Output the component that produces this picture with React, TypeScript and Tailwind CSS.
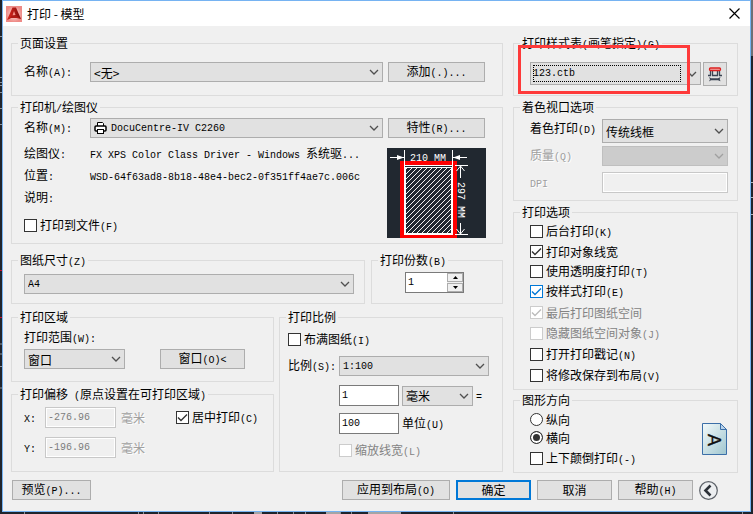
import React, { useState } from "react";
import clsx from "clsx";

// Latin runs are set in a narrower fixed width face than the Chinese ones
function Txt({ children }: { children: string }) {
  const parts = children.split(/([\x20-\x7e]+)/).filter(Boolean);
  return (
    <>
      {parts.map((p, i) =>
        /[\x20-\x7e]/.test(p[0]) ? (
          <span
            key={i}
            className="whitespace-pre font-['Liberation_Mono',monospace] text-[10px]"
          >
            {p}
          </span>
        ) : (
          <span key={i}>{p}</span>
        )
      )}
    </>
  );
}

function Group({
  title,
  className,
  bodyClass,
  children,
}: {
  title: string;
  className?: string;
  bodyClass?: string;
  children: React.ReactNode;
}) {
  return (
    <fieldset className={clsx("min-w-0 border border-[#dcdcdc]", className)}>
      <legend className="ml-1.5 h-[13px] px-0.5 leading-[11px] whitespace-nowrap">
        <Txt>{title}</Txt>
      </legend>
      <div className={bodyClass}>{children}</div>
    </fieldset>
  );
}

function Combo({
  id,
  label,
  options,
  className,
  selectClass = "pl-[3px]",
  latin,
  disabled,
  children,
}: {
  id: string;
  label?: string;
  options: string[];
  className?: string;
  selectClass?: string;
  latin?: boolean;
  disabled?: boolean;
  children?: React.ReactNode;
}) {
  return (
    <div className={clsx("relative", className)}>
      <select
        id={id}
        aria-label={label}
        disabled={disabled}
        className={clsx(
          "block h-full w-full appearance-none rounded-none border pr-5 outline-none",
          disabled
            ? "border-[#bfbfbf] bg-[#cccccc] opacity-100"
            : "border-[#adadad] bg-[#e1e1e1] text-black",
          latin && "font-['Liberation_Mono',monospace] text-[10px]",
          selectClass
        )}
      >
        {options.map((o) => (
          <option key={o}>{o}</option>
        ))}
      </select>
      {children}
      <svg
        className={clsx(
          "pointer-events-none absolute inset-y-0 right-1 my-auto",
          disabled ? "text-[#a0a0a0]" : "text-[#505050]"
        )}
        width="10"
        height="6"
        viewBox="0 0 10 6"
      >
        <path d="M1 1l4 4 4-4" fill="none" stroke="currentColor" strokeWidth="1.3" />
      </svg>
    </div>
  );
}

function Btn({
  className,
  primary,
  children,
}: {
  className?: string;
  primary?: boolean;
  children: string;
}) {
  return (
    <button
      className={clsx(
        "h-5 bg-[#e1e1e1] leading-none whitespace-nowrap",
        primary ? "border-2 border-[#0078d7]" : "border border-[#adadad]",
        className
      )}
    >
      <Txt>{children}</Txt>
    </button>
  );
}

function Check({
  label,
  checked = false,
  disabled,
  active,
}: {
  label: string;
  checked?: boolean;
  disabled?: boolean;
  active?: boolean;
}) {
  return (
    <label
      className={clsx(
        "flex h-[13px] items-center gap-[3px] leading-[13px] whitespace-nowrap",
        disabled && "text-[#838383]"
      )}
    >
      <span className="relative block size-[13px] shrink-0">
        <input
          type="checkbox"
          defaultChecked={checked}
          disabled={disabled}
          className={clsx(
            "peer block size-[13px] appearance-none border bg-white",
            disabled
              ? "border-[#cccccc]"
              : active
                ? "border-[#0078d7]"
                : "border-[#333333]"
          )}
        />
        <svg
          className={clsx(
            "pointer-events-none absolute inset-0 hidden peer-checked:block",
            disabled
              ? "text-[#bcbcbc]"
              : active
                ? "text-[#0078d7]"
                : "text-[#333333]"
          )}
          width="13"
          height="13"
          viewBox="0 0 13 13"
        >
          <path d="M2 6.5L5 9.5L11 3.5" fill="none" stroke="currentColor" strokeWidth="1.4" />
        </svg>
      </span>
      <span>
        <Txt>{label}</Txt>
      </span>
    </label>
  );
}

function Field({
  id,
  label,
  value,
  disabled,
  className,
}: {
  id: string;
  label?: string;
  value: string;
  disabled?: boolean;
  className?: string;
}) {
  return (
    <input
      id={id}
      aria-label={label}
      type="text"
      defaultValue={value}
      disabled={disabled}
      className={clsx(
        "block h-[21px] min-w-0 border pl-0.5 font-['Liberation_Mono',monospace] text-[10px] outline-none",
        disabled
          ? "border-[#c8c8c8] bg-[#f0f0f0] text-[#7d7d7d] inset-ring inset-ring-white"
          : "border-[#7a7a7a] bg-white text-black",
        className
      )}
    />
  );
}

function PaperPreview() {
  return (
    <svg width="99" height="90" viewBox="0 0 99 90" className="shrink-0">
      <defs>
        <pattern id="hatch" width="5" height="5" patternUnits="userSpaceOnUse">
          <path d="M-1 1l2-2M0 5l5-5M4 6l2-2" stroke="#f4f4f4" strokeWidth="1" />
        </pattern>
      </defs>
      <rect width="99" height="90" fill="#212830" />
      <rect x="15" y="15" width="53" height="73" fill="#212830" stroke="#ff0000" strokeWidth="4" />
      <rect x="18" y="18" width="47" height="68" fill="url(#hatch)" stroke="#fff" strokeWidth="2" />
      <path d="M18 18.5h47" stroke="#212830" />
      <path d="M18 19.5h47" stroke="#fff" />
      <g stroke="#fff" fill="none">
        <path d="M17.5 2v15M65.5 2v15M3 9.5h14M66 9.5h14" />
        <path d="M68 17.5h13M68 86.5h13M73.5 18v12M73.5 75v11" />
        <path d="M69.5 23l4-5 4 5M69.5 81l4 5 4-5" />
      </g>
      <path d="M10 7l7 2.5-7 2.5zM73 7l-7 2.5 7 2.5z" fill="#fff" />
      <g fill="#fff" fontFamily="Liberation Mono, monospace" fontSize="10">
        <text x="23" y="13">
          210 MM
        </text>
        <text transform="translate(71 34) rotate(90)">297 MM</text>
      </g>
    </svg>
  );
}

function Logo() {
  return (
    <svg width="16" height="16" viewBox="0 0 16 16">
      <defs>
        <radialGradient id="logoBg">
          <stop offset="0" stopColor="#fbe3e0" />
          <stop offset="1" stopColor="#ee8a86" />
        </radialGradient>
        <linearGradient id="logoA" x1="0" x2="1">
          <stop offset="0" stopColor="#e0281e" />
          <stop offset="1" stopColor="#7d0c0c" />
        </linearGradient>
      </defs>
      <rect width="16" height="16" fill="url(#logoBg)" />
      <path d="M6.5 1.5h3.5L15 13l-3.500-1.500L8 10l-3.500 2L1 14z" fill="url(#logoA)" />
      <path d="M8 5l1.500 4-3 .5z" fill="#f4938b" />
      <path d="M1 14l5.500-4.500 4 .5L15 13l-4.500-1H5z" fill="#b01a14" />
    </svg>
  );
}

function PrinterIcon() {
  return (
    <svg
      className="pointer-events-none absolute inset-y-0 left-1 my-auto"
      width="13"
      height="12"
      viewBox="0 0 13 12"
    >
      <path d="M3.500 4.500v-4h5l1 1v3" fill="#fff" stroke="#000" />
      <rect x="1" y="4" width="11" height="5" rx="1" fill="#fff" stroke="#000" strokeWidth="1.500" />
      <rect x="3.500" y="7.500" width="6" height="4" fill="#fff" stroke="#000" />
    </svg>
  );
}

function EditTableIcon() {
  return (
    <svg width="14" height="15" viewBox="0 0 14 15">
      <path d="M2.500 4v4.500M11.500 4v4.500M4.500 4v4.500h5V4M0 8.500h3M11 8.500h3" fill="none" stroke="#3b4453" strokeWidth="1.300" />
      <rect x="1.500" y="1" width="11" height="2.500" rx="1" fill="#f5b5b0" stroke="#dc1f1f" strokeWidth="1.300" />
      <path d="M1 10l2 1.300h7l2.500-1.300-.8 2 .8 2.300-2.500-1H3L1 14.500l1-2.200z" fill="#3b4453" />
    </svg>
  );
}

function LandscapeIcon() {
  return (
    <svg width="25" height="32" viewBox="0 0 25 32">
      <defs>
        <linearGradient id="page" x1="0" y1="0" x2="1" y2="1">
          <stop offset="0" stopColor="#f4fafb" />
          <stop offset="1" stopColor="#9fc6cf" />
        </linearGradient>
      </defs>
      <path d="M.5.5h18l6 6v25H.5z" fill="url(#page)" stroke="#3c6fa8" />
      <path d="M18.500.5v6h6z" fill="#b9d3ea" stroke="#3c6fa8" />
      <text
        transform="translate(6 11) rotate(90)"
        fontFamily="Liberation Sans, sans-serif"
        fontSize="18"
        fill="#111"
        stroke="#111"
        strokeWidth="0.3"
      >
        A
      </text>
    </svg>
  );
}

// the drawing area that shows round the edges of the dialog
function Backdrop() {
  return (
    <svg className="absolute inset-0 -z-10 h-full w-full" viewBox="0 0 753 514" preserveAspectRatio="none">
      <rect width="753" height="514" fill="#1f242c" />
      <path d="M0 36.500h2M0 77.500h2M0 82.500h2M0 85.500h2M0 92.500h2M0 108.500h2M0 124.500h2M0 344h2M0 354h2M0 366.500h2M0 388h2" stroke="#8b9096" />
      <path d="M0 270.500h2M0 317.500h2" stroke="#c8102e" />
      <path d="M752 0v56" stroke="#6b7077" strokeWidth="2" />
      <path d="M751 182.500h2M751 197.500h2M751 214.500h2" stroke="#b0b4b8" />
      <path d="M24.500 512v2M138.500 512v2M143.500 512v2M158.500 512v2M209.500 512v2M232.500 512v2M277.500 512v2M293.500 512v2M305.500 512v2M340.500 512v2M351.500 512v2M453.500 512v2M742.500 512v2" stroke="#8b9096" />
      <path d="M254 513h8M326 513h14M368 513h33" stroke="#a5a5a5" strokeWidth="2" />
    </svg>
  );
}

const optionsTop = [
  { label: "后台打印(K)" },
  { label: "打印对象线宽", checked: true },
  { label: "使用透明度打印(T)" },
];

const optionsBottom = [
  { label: "按样式打印(E)", checked: true, active: true },
  { label: "最后打印图纸空间", checked: true, disabled: true },
  { label: "隐藏图纸空间对象(J)", disabled: true },
  { label: "打开打印戳记(N)" },
  { label: "将修改保存到布局(V)" },
];

const etched = "text-[#a0a0a0] [text-shadow:1px_1px_0_#ffffff]";

function App() {
  const [copies, setCopies] = useState(1);
  const [dir, setDir] = useState("横向");

  return (
    <div className="relative isolate min-h-screen px-0.5 pb-0.5 font-['Noto_Sans_CJK_SC',sans-serif] text-[12px] leading-[13px] text-black">
      <Backdrop />
      <div className="border border-[#76b3f2] bg-[#f0f0f0]">
        <header className="flex h-[25px] items-center bg-white pr-2.5 pl-[3px]">
          <Logo />
          <h1 className="ml-[5px] flex-1 leading-[11px]">打印 - 模型</h1>
          <button aria-label="关闭" className="size-[11px]">
            <svg width="11" height="11" viewBox="0 0 11 11">
              <path d="M.5.5l10 10M10.500.5l-10 10" stroke="#000" strokeWidth="1.200" />
            </svg>
          </button>
        </header>

        <main className="flex gap-2.5 pt-[11px] pr-3 pl-2">
          <div className="min-w-0 flex-1">
            <Group
              title="页面设置"
              className="mb-[5px]"
              bodyClass="flex items-center pt-3 pr-[17px] pb-[13px] pl-3"
            >
              <label htmlFor="pageSetup" className="w-[66px]">
                <Txt>名称(A):</Txt>
              </label>
              <Combo id="pageSetup" options={["<无>"]} className="h-5 flex-1" />
              <Btn className="ml-[5px] w-[97px]">添加(.)...</Btn>
            </Group>

            <Group
              title="打印机/绘图仪"
              className="mb-2.5"
              bodyClass="pt-1 pr-4 pb-[5px] pl-3"
            >
              <div className="flex items-center pr-px">
                <label htmlFor="printer" className="w-[66px]">
                  <Txt>名称(M):</Txt>
                </label>
                <Combo
                  id="printer"
                  latin
                  options={["DocuCentre-IV C2260"]}
                  className="h-5 flex-1"
                  selectClass="pl-5"
                >
                  <PrinterIcon />
                </Combo>
                <Btn className="ml-[5px] w-[97px]">特性(R)...</Btn>
              </div>
              <div className="flex items-start justify-between pt-1">
                <div>
                  <dl className="grid grid-cols-[66px_1fr] leading-[22px] whitespace-nowrap">
                    <dt className="h-[22px]">
                      <Txt>绘图仪:</Txt>
                    </dt>
                    <dd className="h-[22px]">
                      <Txt>FX XPS Color Class Driver - Windows 系统驱...</Txt>
                    </dd>
                    <dt className="h-[22px]">
                      <Txt>位置:</Txt>
                    </dt>
                    <dd className="h-[22px]">
                      <Txt>WSD-64f63ad8-8b18-48e4-bec2-0f351ff4ae7c.006c</Txt>
                    </dd>
                    <dt className="h-[22px]">
                      <Txt>说明:</Txt>
                    </dt>
                    <dd />
                  </dl>
                  <div className="pt-[11px]">
                    <Check label="打印到文件(F)" />
                  </div>
                </div>
                <div className="pt-1.5">
                  <PaperPreview />
                </div>
              </div>
            </Group>

            <div className="mb-[7px] flex gap-1.5">
              <Group
                title="图纸尺寸(Z)"
                className="flex-1"
                bodyClass="pt-[7px] pr-2.5 pb-[9px] pl-3"
              >
                <Combo id="paper" label="图纸尺寸" latin options={["A4"]} className="h-5" />
              </Group>
              <Group title="打印份数(B)" className="w-[132px]" bodyClass="pt-[5px] pl-[33px]">
                <div className="flex h-[21px] w-[59px] border border-[#7a7a7a] bg-white">
                  <input
                    aria-label="打印份数"
                    type="text"
                    value={copies}
                    onChange={(e) => setCopies(Number(e.target.value) || 1)}
                    className="min-w-0 flex-1 pl-0.5 font-['Liberation_Mono',monospace] text-[10px] outline-none"
                  />
                  <div className="flex w-4 flex-col gap-px bg-[#f0f0f0]">
                    <button
                      aria-label="增加"
                      onClick={() => setCopies(copies + 1)}
                      className="flex flex-1 items-center justify-center border border-[#adadad]"
                    >
                      <svg width="5" height="3" viewBox="0 0 5 3">
                        <path d="M0 3l2.500-3L5 3z" />
                      </svg>
                    </button>
                    <button
                      aria-label="减少"
                      onClick={() => setCopies(Math.max(1, copies - 1))}
                      className="flex flex-1 items-center justify-center border border-[#adadad]"
                    >
                      <svg width="5" height="3" viewBox="0 0 5 3">
                        <path d="M0 0l2.500 3L5 0z" />
                      </svg>
                    </button>
                  </div>
                </div>
              </Group>
            </div>

            <div className="flex gap-[5px]">
              <div className="flex flex-1 flex-col gap-1.5">
                <Group title="打印区域" bodyClass="px-3 pt-[7px] pb-3">
                  <label htmlFor="area" className="block h-[13px] leading-[11px]">
                    <Txt>打印范围(W):</Txt>
                  </label>
                  <div className="flex gap-[35px] pt-[5px]">
                    <Combo id="area" options={["窗口"]} className="h-5 w-[101px]" />
                    <Btn className="w-[85px]">{"窗口(O)<"}</Btn>
                  </div>
                </Group>
                <Group
                  title="打印偏移 (原点设置在可打印区域)"
                  className="flex-1"
                  bodyClass="px-3 pt-1.5"
                >
                  <div className="flex items-center">
                    <label htmlFor="offX" className="w-[21px]">
                      <Txt>X:</Txt>
                    </label>
                    <Field id="offX" value="-276.96" disabled className="w-[71px]" />
                    <span className={clsx("w-[60px] pl-[5px]", etched)}>毫米</span>
                    <Check label="居中打印(C)" checked />
                  </div>
                  <div className="mt-[9px] flex items-center">
                    <label htmlFor="offY" className="w-[21px]">
                      <Txt>Y:</Txt>
                    </label>
                    <Field id="offY" value="-196.96" disabled className="w-[71px]" />
                    <span className={clsx("pl-[5px]", etched)}>毫米</span>
                  </div>
                </Group>
              </div>

              <Group
                title="打印比例"
                className="w-[224px]"
                bodyClass="pt-[9px] pr-[13px] pb-[14px] pl-2"
              >
                <Check label="布满图纸(I)" />
                <div className="mt-2.5 flex items-center">
                  <label htmlFor="scale" className="w-[51px]">
                    <Txt>比例(S):</Txt>
                  </label>
                  <Combo id="scale" latin options={["1:100"]} className="h-5 flex-1" />
                </div>
                <div className="mt-[9px] flex items-center gap-[3px] pl-[51px]">
                  <Field id="paperUnits" label="图纸单位" value="1" className="w-[60px]" />
                  <Combo id="unit" label="单位" options={["毫米"]} className="h-5 w-[71px]" />
                  <span>
                    <Txt>=</Txt>
                  </span>
                </div>
                <div className="mt-[7px] flex items-center gap-[3px] pl-[51px]">
                  <Field id="drawUnits" value="100" className="w-[60px]" />
                  <label htmlFor="drawUnits">
                    <Txt>单位(U)</Txt>
                  </label>
                </div>
                <div className="mt-2.5 pl-[51px]">
                  <Check label="缩放线宽(L)" disabled />
                </div>
              </Group>
            </div>
          </div>

          <div className="w-[225px]">
            <div className="relative mb-[5px]">
              <Group
                title="打印样式表(画笔指定)(G)"
                bodyClass="flex items-start gap-0.5 pt-3 pr-2.5 pb-[9px] pl-4"
              >
                <Combo
                  id="styleTable"
                  label="打印样式表"
                  latin
                  options={["123.ctb"]}
                  className="h-[23px] flex-1"
                  selectClass="pl-0.5"
                >
                  <div className="pointer-events-none absolute inset-y-[3px] right-5 left-[3px] border border-dotted border-black" />
                </Combo>
                <button
                  aria-label="编辑"
                  className="flex size-6 items-center justify-center border border-[#adadad] bg-[#e1e1e1]"
                >
                  <EditTableIcon />
                </button>
              </Group>
              <div className="pointer-events-none absolute top-2 right-12 bottom-0.5 left-[5px] border-3 border-[#fe3a3a]" />
            </div>

            <Group
              title="着色视口选项"
              className="mb-[5px]"
              bodyClass="pt-[5px] pr-[9px] pb-[7px] pl-4"
            >
              <div className="flex items-start">
                <label htmlFor="shade" className="h-5 w-[72px] leading-[18px]">
                  <Txt>着色打印(D)</Txt>
                </label>
                <Combo id="shade" options={["传统线框"]} className="h-6 flex-1" />
              </div>
              <div className="mt-[3px] flex items-start">
                <label htmlFor="quality" className={clsx("h-5 w-[72px] leading-[18px]", etched)}>
                  <Txt>质量(Q)</Txt>
                </label>
                <Combo id="quality" options={[""]} disabled className="h-5 flex-1" />
              </div>
              <div className="mt-1.5 flex items-center">
                <label htmlFor="dpi" className={clsx("w-[72px]", etched)}>
                  <Txt>DPI</Txt>
                </label>
                <Field id="dpi" value="" disabled className="flex-1" />
              </div>
            </Group>

            <Group title="打印选项" className="mb-1" bodyClass="pt-1.5 pb-[7px] pl-4">
              <div className="flex flex-col gap-[7px]">
                {optionsTop.map((o) => (
                  <Check key={o.label} {...o} />
                ))}
              </div>
              <div className="mt-[7px] flex flex-col gap-2">
                {optionsBottom.map((o) => (
                  <Check key={o.label} {...o} />
                ))}
              </div>
            </Group>

            <Group
              title="图形方向"
              bodyClass="flex items-center justify-between pt-1.5 pr-2.5 pb-[7px] pl-4"
            >
              <div>
                {["纵向", "横向"].map((d) => (
                  <label key={d} className="mb-[5px] flex h-[13px] items-center gap-[3px]">
                    <input
                      type="radio"
                      name="dir"
                      checked={dir === d}
                      onChange={() => setDir(d)}
                      className="size-[13px] appearance-none rounded-full border border-[#333333] bg-white checked:bg-[#333333] checked:inset-ring-2 checked:inset-ring-white"
                    />
                    {d}
                  </label>
                ))}
                <div className="mt-2">
                  <Check label="上下颠倒打印(-)" />
                </div>
              </div>
              <LandscapeIcon />
            </Group>
          </div>
        </main>

        <footer className="flex items-center gap-1.5 pt-[7px] pr-8 pb-[11px] pl-[9px]">
          <Btn className="mr-auto w-[79px]">预览(P)...</Btn>
          <Btn className="w-[108px]">应用到布局(O)</Btn>
          <Btn className="w-[75px]" primary>
            确定
          </Btn>
          <Btn className="w-[75px]">取消</Btn>
          <Btn className="w-[75px]">帮助(H)</Btn>
          <button aria-label="更少选项" className="size-[19px]">
            <svg width="19" height="19" viewBox="0 0 19 19">
              <circle cx="9.500" cy="9.500" r="8.800" fill="#eceef0" stroke="#5c6168" strokeWidth="1.200" />
              <path d="M11.500 4.500l-5 5 5 5" fill="none" stroke="#2c3138" strokeWidth="2.600" />
            </svg>
          </button>
        </footer>
      </div>
    </div>
  );
}

export default App;
